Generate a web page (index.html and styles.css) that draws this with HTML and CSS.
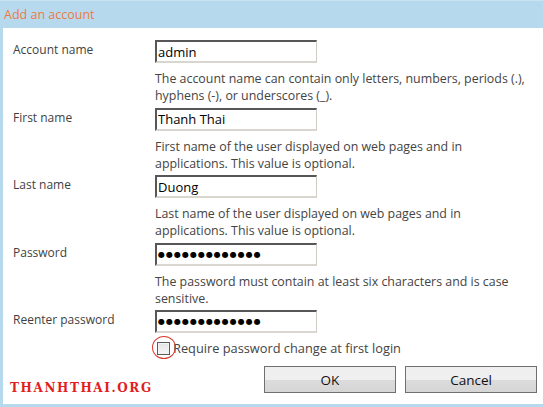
FILE: index.html
```html
<!DOCTYPE html>
<html lang="en">
<head>
<meta charset="utf-8">
<title>Add an account</title>
<link rel="stylesheet" href="styles.css">
</head>
<body>
<div class="dialog">
  <div class="titlebar">Add an account</div>
  <div class="content">
    <form class="form">
      <div class="row">
        <label class="label" for="acc">Account name</label>
        <div class="field">
          <input class="input" id="acc" type="text" value="admin" readonly>
          <p class="help">The account name can contain only letters, numbers, periods (.), hyphens (-), or underscores (_).</p>
        </div>
      </div>
      <div class="row">
        <label class="label" for="fn">First name</label>
        <div class="field">
          <input class="input" id="fn" type="text" value="Thanh Thai" readonly>
          <p class="help">First name of the user displayed on web pages and in applications. This value is optional.</p>
        </div>
      </div>
      <div class="row">
        <label class="label" for="ln">Last name</label>
        <div class="field">
          <input class="input" id="ln" type="text" value="Duong" readonly>
          <p class="help">Last name of the user displayed on web pages and in applications. This value is optional.</p>
        </div>
      </div>
      <div class="row">
        <label class="label">Password</label>
        <div class="field">
          <div class="input pwd">●●●●●●●●●●●●●</div>
          <p class="help">The password must contain at least six characters and is case sensitive.</p>
        </div>
      </div>
      <div class="row">
        <label class="label">Reenter password</label>
        <div class="field">
          <div class="input pwd">●●●●●●●●●●●●●</div>
        </div>
      </div>
      <div class="check-row">
        <span class="check-wrap"><span class="checkbox"></span><span class="circle"></span></span>
        <span class="check-text">Require password change at first login</span>
      </div>
    </form>
    <div class="footer">
      <span class="watermark">THANHTHAI.ORG</span>
      <div class="buttons">
        <button class="btn" type="button">OK</button>
        <button class="btn" type="button">Cancel</button>
      </div>
    </div>
  </div>
</div>
</body>
</html>
```
FILE: styles.css
```css
html, body {
  margin: 0;
  padding: 0;
  background: #ffffff;
}
body {
  font-family: "Open Sans", "Noto Sans", sans-serif;
  font-size: 12px;
  color: #444444;
}
.dialog {
  width: 543px;
  height: 407px;
  box-sizing: border-box;
  border-left: 3px solid #b7d9ee;
  border-bottom: 3px solid #b7d9ee;
  display: flex;
  flex-direction: column;
  background: #ffffff;
}
.titlebar {
  height: 28px;
  margin-left: -3px;
  padding-left: 4px;
  background: #b7d9ee;
  color: #ec7b3e;
  font-size: 12.5px;
  line-height: 28px;
  border-top: 1px solid #c9e3f3;
  box-sizing: border-box;
}
.content {
  flex: 1;
  display: flex;
  flex-direction: column;
}
.form {
  padding: 12px 0 0 10px;
  margin: 0;
}
.row {
  display: grid;
  grid-template-columns: 142px 376px;
  margin-bottom: 3.5px;
}
.label {
  padding-top: 1px;
  line-height: 17px;
  color: #3f3f3f;
}
.field {
  display: flex;
  flex-direction: column;
}
.input {
  width: 162px;
  height: 23px;
  box-sizing: border-box;
  margin: 0;
  padding: 0 0 0 1px;
  border-top: 2px solid #575757;
  border-left: 2px solid #575757;
  border-right: 1px solid #cfcdc5;
  border-bottom: 2px solid #d8d6ce;
  font-family: "Open Sans", "Noto Sans", sans-serif;
  font-size: 13px;
  color: #000000;
  background: #ffffff;
  outline: none;
}
.pwd {
  font-family: "DejaVu Sans", sans-serif;
  font-size: 8px;
  line-height: 20px;
  letter-spacing: 1px;
  padding-left: 1px;
}
.help {
  margin: 7px 0 0;
  line-height: 17px;
  font-size: 12.4px;
  color: #444444;
}
.check-row {
  display: flex;
  align-items: center;
  margin-left: 144px;
  margin-top: 4px;
  height: 22px;
}
.check-wrap {
  position: relative;
  width: 13px;
  height: 13px;
  margin-right: 3px;
}
.checkbox {
  display: block;
  width: 13px;
  height: 13px;
  box-sizing: border-box;
  border: 1px solid #5a5a5a;
  background: linear-gradient(#e4e4e4, #f6f6f6);
  box-shadow: inset 0 0 0 1px #f4f4f4;
}
.circle {
  position: absolute;
  left: -5px;
  top: -6px;
  width: 24px;
  height: 23px;
  box-sizing: border-box;
  border: 1px solid #d9372c;
  border-radius: 50%;
}
.check-text {
  color: #444444;
  line-height: 17px;
  font-size: 12.8px;
}
.footer {
  flex: 1;
  display: flex;
  justify-content: space-between;
  align-items: flex-start;
  padding: 7px 6px 0 7px;
}
.watermark {
  margin-top: 15px;
  font-family: "DejaVu Serif", serif;
  font-weight: bold;
  font-size: 12px;
  letter-spacing: 1.6px;
  color: #e21d1d;
}
.buttons {
  display: flex;
  gap: 9px;
}
.btn {
  width: 132px;
  height: 27px;
  box-sizing: border-box;
  border: 1px solid #707070;
  border-radius: 0;
  background: linear-gradient(#efefef 0, #efefef 50%, #dcdcdc 50%, #d6d6d6 100%);
  font-family: "Open Sans", "Noto Sans", sans-serif;
  font-size: 13.5px;
  color: #111111;
  padding: 0;
}
```
